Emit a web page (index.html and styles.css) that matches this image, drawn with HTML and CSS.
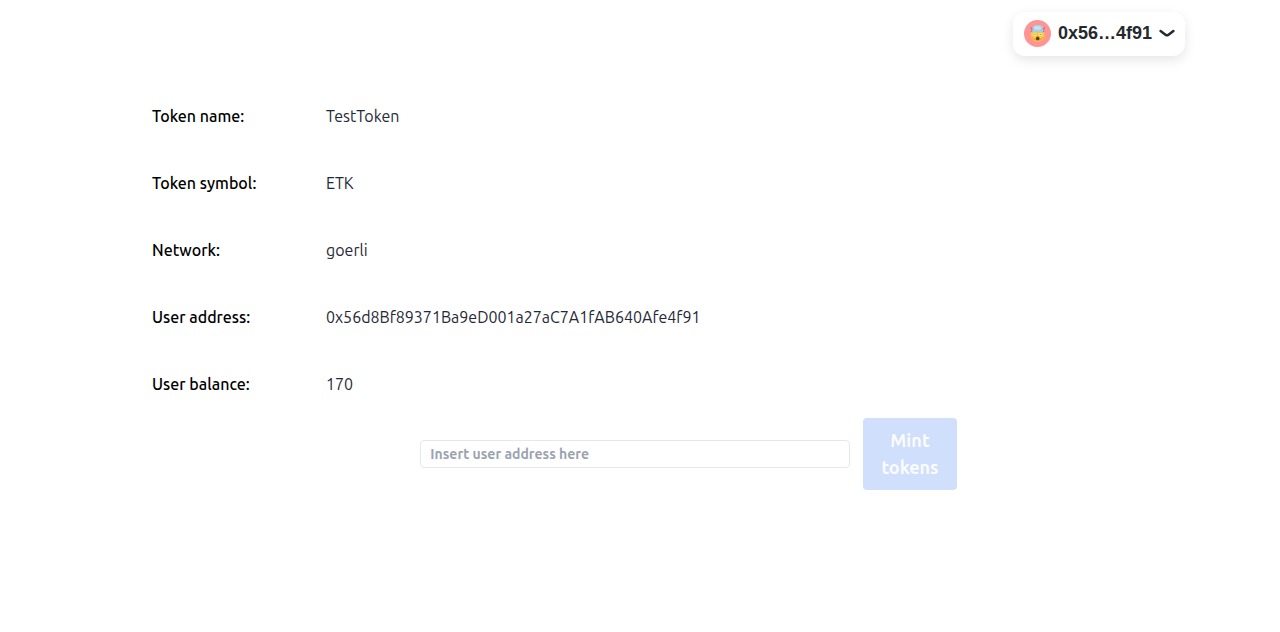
FILE: index.html
```html
<!DOCTYPE html>
<html lang="en">
<head>
<meta charset="utf-8">
<meta name="viewport" content="width=device-width, initial-scale=1">
<title>TestToken</title>
<link rel="stylesheet" href="styles.css">
</head>
<body>
<header class="topbar">
  <button class="account" type="button">
    <svg class="account-avatar" viewBox="0 0 26 26" aria-hidden="true">
      <circle cx="13" cy="13" r="13" fill="#ff9494"/>
      <circle cx="13.2" cy="14.2" r="6.9" fill="#f8c944"/>
      <path d="M6.400 14.500a6.900 6.900 0 0 0 13.600 0q-1 3.500-6.800 3.500T6.400 14.500z" fill="#eda83a"/>
      <path d="M7 12.500 8.600 8Q7.400 6 9.800 5.600 11.300 4 13.300 5 15.500 4 17 5.800 19.200 6.200 17.900 8.300L19.400 12.500Q13 10.500 7 12.500z" fill="#a9cce0"/>
      <path d="M9.500 6.500q3.500-1.500 7 .3L15.800 9.500h-5.500z" fill="#c5e2ef"/>
      <path d="M6.500 7 8 9.500M20 7l-1.500 2.500M6.800 10.500l1 1M19.500 10.500l-1 1" stroke="#b56c9c" stroke-width="1" fill="none"/>
      <circle cx="10.500" cy="13.900" r="1.500" fill="#fbe3a4"/>
      <circle cx="15.900" cy="13.900" r="1.500" fill="#fbe3a4"/>
      <circle cx="10.600" cy="13.900" r=".5" fill="#9a6b3c"/>
      <circle cx="15.800" cy="13.900" r=".5" fill="#9a6b3c"/>
      <ellipse cx="13.200" cy="17.800" rx="1.700" ry="1.800" fill="#593d27"/>
    </svg>
    <span>0x56…4f91</span>
    <svg class="account-chevron" viewBox="0 0 16 10" aria-hidden="true">
      <path d="M1.600 3 6.800 6.900Q8 7.700 9.200 6.900L14.400 3" fill="none" stroke="#25292e" stroke-width="2.500" stroke-linecap="round"/>
    </svg>
  </button>
</header>
<main class="token">
  <dl class="details">
    <dt>Token name:</dt><dd>TestToken</dd>
    <dt>Token symbol:</dt><dd>ETK</dd>
    <dt>Network:</dt><dd>goerli</dd>
    <dt>User address:</dt><dd>0x56d8Bf89371Ba9eD001a27aC7A1fAB640Afe4f91</dd>
    <dt>User balance:</dt><dd>170</dd>
  </dl>
  <form class="mint">
    <input class="mint-input" type="text" placeholder="Insert user address here" aria-label="User address">
    <button class="mint-button" type="submit" disabled>Mint tokens</button>
  </form>
</main>
</body>
</html>
```
FILE: styles.css
```css
* {
  box-sizing: border-box;
}

body {
  margin: 0;
  background: #fff;
  color: #1f2937;
  font: 16px/23px Ubuntu, "Noto Sans", sans-serif;
}

.topbar {
  display: flex;
  justify-content: flex-end;
  padding: 12px 95px 0;
}

.account {
  display: flex;
  align-items: center;
  gap: 7px;
  height: 44px;
  padding: 0 10px 2px 11px;
  border: 0;
  border-radius: 12px;
  background: #fff;
  box-shadow: 0 4px 12px rgba(0, 0, 0, 0.1);
  color: #25292e;
  font: bold 18px/24px "Liberation Sans", Arial, sans-serif;
  cursor: pointer;
}

.account-avatar {
  width: 27px;
  height: 27px;
}

.account-chevron {
  width: 16px;
  height: 10px;
}

.token {
  max-width: 957px;
  padding: 49px 0 0 152px;
}

.details {
  display: grid;
  grid-template-columns: 174px 1fr;
  row-gap: 44px;
  margin: 0;
}

.details dt {
  color: #000;
  font-weight: 500;
}

.details dd {
  margin: 0;
  overflow-wrap: anywhere;
}

.mint {
  display: flex;
  align-items: center;
  gap: 13px;
  width: 66.666%;
  margin: 22px 0 0 auto;
}

.mint-input {
  flex: 1;
  min-width: 0;
  height: 28px;
  padding: 0 9px;
  border: 1px solid #e5e7eb;
  border-radius: 4px;
  background: #fff;
  color: #374151;
  font: bold 14px/18px Ubuntu, "Noto Sans", sans-serif;
}

.mint-input::placeholder {
  color: #9ca3af;
  opacity: 1;
}

.mint-button {
  width: 94px;
  padding: 9px 14px;
  border: 0;
  border-radius: 4px;
  background: #cfdffc;
  color: #fafcff;
  font: bold 18px/27px Ubuntu, "Noto Sans", sans-serif;
}
```
